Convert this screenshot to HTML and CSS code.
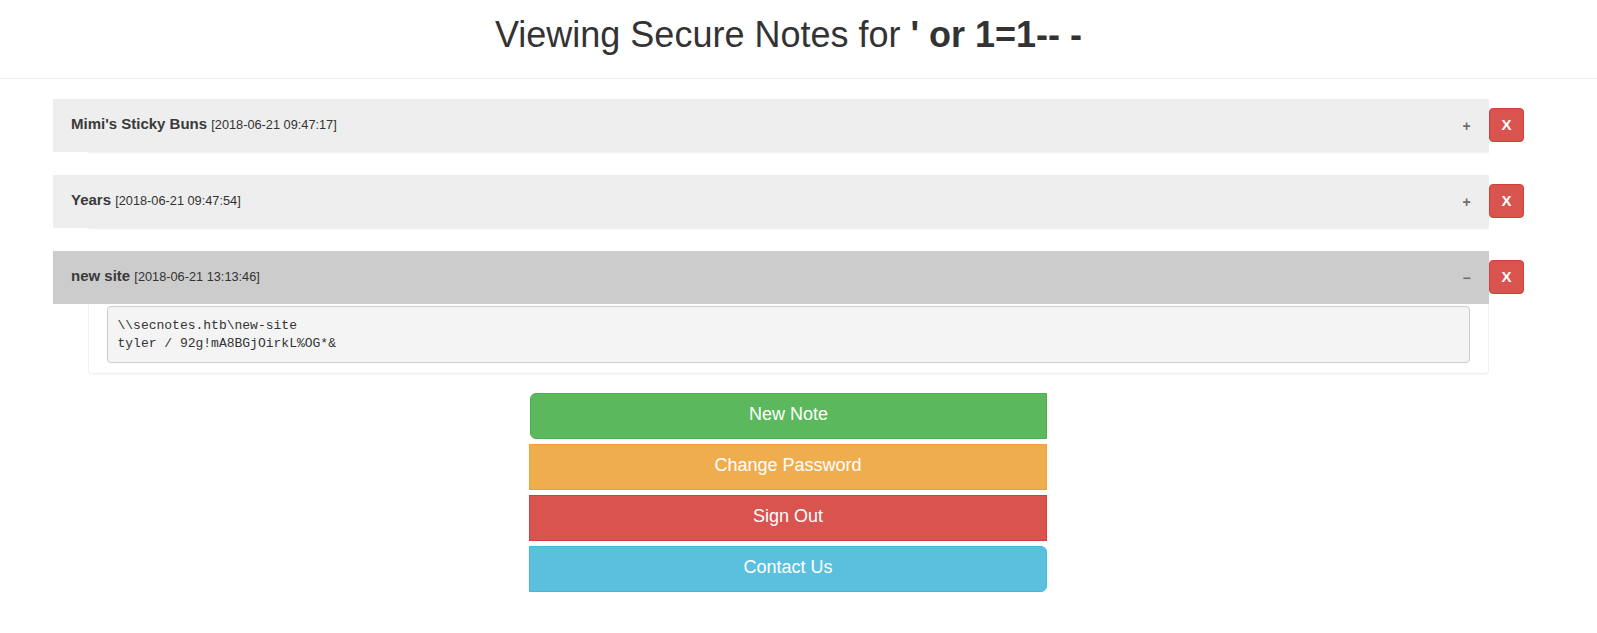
FILE: index.html
```html
<!DOCTYPE html>
<html>
<head>
<meta charset="utf-8">
<title>Secure Notes</title>
<link rel="stylesheet" href="styles.css">
</head>
<body>
<header class="page-header">
  <h1 class="page-title">Viewing Secure Notes for <strong>' or 1=1-- -</strong></h1>
</header>
<main class="content">
  <section class="notes">
    <div class="note-row">
      <div class="note">
        <div class="note-heading">
          <span class="note-title">Mimi's Sticky Buns <small class="note-date">[2018-06-21 09:47:17]</small></span>
          <span class="note-toggle">+</span>
        </div>
        <div class="note-collapse"></div>
      </div>
      <button class="delete-btn">X</button>
    </div>
    <div class="note-row">
      <div class="note">
        <div class="note-heading">
          <span class="note-title">Years <small class="note-date">[2018-06-21 09:47:54]</small></span>
          <span class="note-toggle">+</span>
        </div>
        <div class="note-collapse"></div>
      </div>
      <button class="delete-btn">X</button>
    </div>
    <div class="note-row">
      <div class="note">
        <div class="note-heading note-heading-open">
          <span class="note-title">new site <small class="note-date">[2018-06-21 13:13:46]</small></span>
          <span class="note-toggle">&minus;</span>
        </div>
        <div class="note-body">
          <pre class="note-text">\\secnotes.htb\new-site
tyler / 92g!mA8BGjOirkL%OG*&amp;</pre>
        </div>
      </div>
      <button class="delete-btn">X</button>
    </div>
  </section>
  <nav class="actions">
    <a class="action action-green">New Note</a>
    <a class="action action-orange">Change Password</a>
    <a class="action action-red">Sign Out</a>
    <a class="action action-blue">Contact Us</a>
  </nav>
</main>
</body>
</html>
```
FILE: styles.css
```css
html, body {
  margin: 0;
  padding: 0;
  background: #fff;
}

body {
  font-family: "Liberation Sans", Arial, Helvetica, sans-serif;
  font-size: 14px;
  color: #333;
}

.page-header {
  height: 78px;
  border-bottom: 1px solid #eee;
  padding: 0 73px 0 53px;
  box-sizing: content-box;
}

.page-title {
  margin: 0;
  padding-top: 15px;
  font-size: 36px;
  line-height: 40px;
  font-weight: 400;
  text-align: center;
  color: #333;
}

.page-title strong {
  font-weight: 700;
}

.content {
  padding: 20px 73px 0 53px;
}

.notes {
  display: flex;
  flex-direction: column;
  gap: 22px;
}

.note-row {
  display: flex;
  align-items: flex-start;
}

.note {
  flex: 1;
  min-width: 0;
}

.delete-btn {
  flex: none;
  width: 35px;
  height: 34px;
  margin-top: 9px;
  padding: 0;
  border: 1px solid #d43f3a;
  border-radius: 4px;
  background: #d9534f;
  color: #fff;
  font-family: "Liberation Sans", Arial, sans-serif;
  font-size: 15px;
  font-weight: 700;
  line-height: 32px;
  text-align: center;
}

.note-heading {
  display: flex;
  align-items: center;
  justify-content: space-between;
  height: 53px;
  padding: 0 18px 0 18px;
  background: #eee;
  box-sizing: border-box;
}

.note-heading-open {
  background: #ccc;
}

.note-title {
  font-size: 15px;
  font-weight: 700;
  color: #3a3a3a;
  padding-bottom: 4px;
}

.note-date {
  font-size: 12.75px;
  font-weight: 400;
  color: #333;
}

.note-toggle {
  font-size: 14px;
  font-weight: 700;
  color: #6e6e6e;
  width: 9px;
  text-align: center;
}

.note-collapse {
  margin-left: 35px;
  height: 0;
  border-bottom: 1px solid #f3f3f3;
  box-shadow: 0 1px 1px rgba(0, 0, 0, 0.03);
}

.note-body {
  margin-left: 35px;
  padding: 2px 18px 10px 18px;
  border: 1px solid #f0f0f0;
  border-top: none;
  border-radius: 0 0 4px 4px;
  box-shadow: 0 1px 1px rgba(0, 0, 0, 0.03);
}

.note-text {
  margin: 0;
  padding: 9.5px;
  font-family: "Liberation Mono", "Courier New", monospace;
  font-size: 13px;
  line-height: 18px;
  color: #333;
  background: #f4f4f4;
  border: 1px solid #ccc;
  border-radius: 4px;
}

.actions {
  width: 517px;
  margin: 19px auto 0;
  display: flex;
  flex-direction: column;
  gap: 5px;
}

.action {
  display: block;
  height: 46px;
  box-sizing: border-box;
  padding: 8px 16px 12px;
  border: 1px solid transparent;
  font-size: 18px;
  line-height: 24px;
  text-align: center;
  color: #fff;
}

.action-green {
  background: #5cb85c;
  border-color: #4cae4c;
  border-radius: 6px 0 0 6px;
}

.action-orange {
  margin-left: -1px;
  background: #f0ad4e;
  border-color: #eea236;
}

.action-red {
  margin-left: -1px;
  background: #d9534f;
  border-color: #d43f3a;
}

.action-blue {
  margin-left: -1px;
  background: #5bc0de;
  border-color: #46b8da;
  border-radius: 0 6px 6px 0;
}
```
